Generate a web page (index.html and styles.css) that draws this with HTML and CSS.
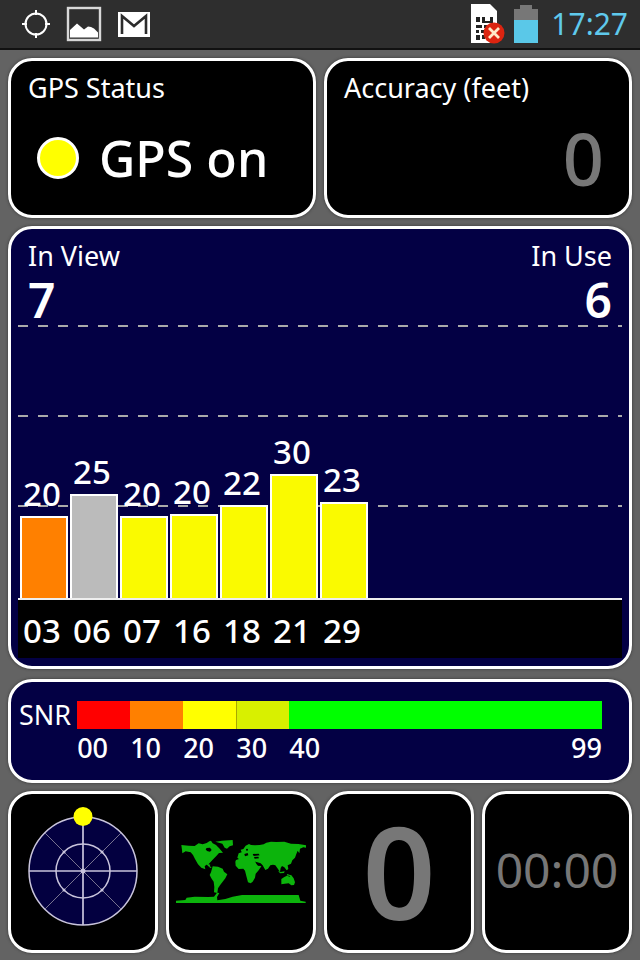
FILE: index.html
```html
<!DOCTYPE html>
<html lang="en">
<head>
    <meta charset="utf-8">
    <meta name="viewport" content="width=device-width, initial-scale=1">
    <title>GPS Status</title>
    <link rel="stylesheet" href="styles.css">
</head>
<body>
    <header class="statusbar">
        <div class="notifications">
            <svg width="28" height="28" viewBox="0 0 28 28" fill="none" stroke="#fff" stroke-width="2">
                <circle cx="14" cy="14" r="10.5"/>
                <path d="M14 0v5M14 23v5M0 14h5M23 14h5"/>
            </svg>
            <svg width="36" height="36" viewBox="0 0 36 36">
                <rect x="2" y="2" width="32" height="32" fill="none" stroke="#d8d8d8" stroke-width="2.4"/>
                <path d="M4 31.500V24l7-6.500 7 6 4-3 3 .5 3 1.500 4 4v5z" fill="#fff"/>
            </svg>
            <svg width="32" height="25" viewBox="0 0 32 25">
                <path d="M0 0h32v25H0z" fill="#fff"/>
                <path d="M4 22V4l12 10L28 4v18" fill="none" stroke="#2c2c2c" stroke-width="2.600"/>
            </svg>
        </div>
        <div class="system">
            <svg width="34" height="40" viewBox="0 0 34 40">
                <path d="M0 0h19l7 7v32H0z" fill="#fff"/>
                <path d="M5 13h4v5H5zM11 13h3v4h5v-4h3v6H11zM5 21h6v3H5zM13 21h6v3h-6zM5 26h3v3H5zM10 26h4v3h-4zM5 31h4v5H5zM11 31h3v4h-3z" fill="#222"/>
                <circle cx="23" cy="29" r="10.5" fill="#dc2410"/>
                <path d="M18 24l10 10M28 24L18 34" stroke="#ffe9c8" stroke-width="2.800"/>
            </svg>
            <svg width="26" height="40" viewBox="0 0 26 40">
                <path d="M7 1h12v4h6v12H1V5h6z" fill="#777"/>
                <path d="M1 16h24v23H1z" fill="#5ac8e8"/>
            </svg>
            <time class="clock">17:27</time>
        </div>
    </header>

    <main class="dashboard">
        <div class="row">
            <section class="panel summary">
                <h2>GPS Status</h2>
                <div class="gps-state"><span class="led"></span>GPS on</div>
            </section>
            <section class="panel summary">
                <h2>Accuracy (feet)</h2>
                <div class="accuracy">0</div>
            </section>
        </div>

        <section class="panel blue satellites">
            <div class="counts">
                <div>
                    <h2>In View</h2>
                    <div class="count">7</div>
                </div>
                <div class="in-use">
                    <h2>In Use</h2>
                    <div class="count">6</div>
                </div>
            </div>
            <div class="plot">
                <div class="sat"><span>20</span><div class="bar orange" style="height: 82px"></div></div>
                <div class="sat"><span>25</span><div class="bar grey" style="height: 104px"></div></div>
                <div class="sat"><span>20</span><div class="bar" style="height: 82px"></div></div>
                <div class="sat"><span>20</span><div class="bar" style="height: 84px"></div></div>
                <div class="sat"><span>22</span><div class="bar" style="height: 93px"></div></div>
                <div class="sat"><span>30</span><div class="bar" style="height: 124px"></div></div>
                <div class="sat"><span>23</span><div class="bar" style="height: 96px"></div></div>
            </div>
            <div class="ids">
                <span>03</span><span>06</span><span>07</span><span>16</span><span>18</span><span>21</span><span>29</span>
            </div>
        </section>

        <section class="panel blue snr">
            <h2>SNR</h2>
            <div class="scale colors">
                <span class="c00"></span><span class="c10"></span><span class="c20"></span><span class="c30"></span><span class="c40"></span>
            </div>
            <div class="scale values">
                <span>00</span><span>10</span><span>20</span><span>30</span><span class="last"><span>40</span><span>99</span></span>
            </div>
        </section>

        <div class="row">
            <section class="panel tile">
                <svg width="112" height="130" viewBox="-56 -65 112 130" fill="none" stroke="#c9c4dc">
                    <circle r="54" fill="#030040" stroke-width="1.500"/>
                    <circle r="27" stroke-width="1.500"/>
                    <path d="M-54 0H54M0-54V54" stroke-width="1.700"/>
                    <path d="M-38-38L38 38M38-38L-38 38" stroke="#77738f"/>
                    <g fill="#c9c4dc" stroke="none">
                        <circle r="2.500"/>
                        <circle cx="-19" cy="-19" r="1.500"/>
                        <circle cx="19" cy="-19" r="1.500"/>
                        <circle cx="-19" cy="19" r="1.500"/>
                        <circle cx="19" cy="19" r="1.500"/>
                    </g>
                    <circle cy="-54.500" r="9.500" fill="#ff0" stroke="none"/>
                </svg>
            </section>
            <section class="panel tile">
                <svg width="130" height="64" viewBox="50 160 390 192" fill="#0cb40c">
                    <!-- Americas -->
                    <path d="M66 178l22 2 18 1 12-8 12 3 12-4 8-5 5-2 5 8 10 5 9 9 12 14-12 1-8 9-11 11-9 10-6 6-4-1-5 5 2 9-12-5-10-10-9-16-6-12-7-8-15-3-10 6-1-10z"/>
                    <path d="M143 234l10 3-2 5 6 3-4 2-9-8zM160 242l16 1 14 6 4 9 10 8-6 12-8 10-8 11-6 9-2 14-10-2 1-16-2-16-7-10-5-10 4-8z"/>
                    <path d="M168 168l20-3 32-2 1 16-10 3-8 7-7-3-7-12zM160 180l10 3 8 8 8 7-10 1-12-9z"/>
                    <!-- Europe, Asia -->
                    <path d="M234 216l4-13 9-3-3-8 8-2 7-10 10-5 6 3 12 1 14-1 12-2 8-5 14-3 16 1 24-1 20 6 22 1 19 3 19 2-9 7-14-2-10 4-2 14-5-8-4 10-4 11-8 8-4 10-10 5 2 11-5 4-7-9-7-4-4 6-2 12-6-9-8-11-7-2-8 2-7 10-8 4-8-14-6-6-15-5-13 2-11-4-8-1-6 5z"/>
                    <!-- Africa -->
                    <path d="M230 223l18-6 12 4 12 3 14 2 8 12 12 4-8 12-9 10-2 12-7 12-6 5-8-3-5-19-4-16-5-6-14 1-9-10-1-12z"/>
                    <path d="M356 255l8 4 12-2-2 5-12 1zM384 265l14 5-4 2-12-3zM366 280l9-6 8-4 8 3 4-6 8 11 4 12-3 8-8 1-8-6-12 1-10 2z"/>
                    <!-- Antarctica -->
                    <path d="M50 345l28-2 4-7 24-3 40 1 18-1 9-12 7 1-7 12 1 10 24-4 22-7 28-5h170l5 17 16 3v5H50z"/>
                    <g fill="#000">
                        <path d="M142 187l10-1 5 7-5 5-9-2-4-5zM255 205l10-3 2 7-10 3zM280 205l18-1 3 5-18 2zM284 214l13-1 2 5-13 1zM290 233l6 7 6 1-4-8z"/>
                        <circle cx="263" cy="192" r="3"/>
                    </g>
                </svg>
            </section>
            <section class="panel tile speed">0</section>
            <section class="panel tile elapsed">00:00</section>
        </div>
    </main>
</body>
</html>
```
FILE: styles.css
```css
* { box-sizing: border-box; }
body { margin: 0; min-height: 100vh; background: #636363; color: #fff; font-family: "Noto Sans", sans-serif; font-weight: 500; }
h2 { margin: 0; font-size: 27px; line-height: 32px; font-weight: normal; }
svg { display: block; flex: none; }

.statusbar { display: flex; justify-content: space-between; align-items: center; height: 50px; padding: 0 12px 0 22px; background: #2e2e2e; border-bottom: 2px solid #111; }
.notifications, .system { display: flex; align-items: center; }
.notifications { gap: 16px; }
.system { gap: 8px; }
.clock { color: #5fc9ec; font-size: 30px; line-height: 40px; margin-left: 4px; font-weight: normal; }

.dashboard { display: flex; flex-direction: column; gap: 8px; padding: 8px; }
.row { display: flex; gap: 8px; }
.panel { border: 3px solid #fff; border-radius: 24px; background: #000; box-shadow: 0 0 3px #333; }
.blue { background: #030044; }

.summary { flex: 1; height: 160px; padding: 11px 17px; }
.gps-state { display: flex; align-items: center; gap: 20px; margin-top: 18px; padding-left: 9px; font-size: 50px; line-height: 72px; }
.led { width: 42px; height: 42px; border: 3px solid #fff; border-radius: 50%; background: #ff0; }
.accuracy { margin-top: 18px; padding-right: 8px; color: #777; font-size: 72px; line-height: 72px; text-align: right; }

.satellites { padding: 11px 7px 8px; margin-bottom: 2px; }
.counts { display: flex; justify-content: space-between; height: 85px; padding: 0 10px; }
.in-use { text-align: right; }
.count { font-size: 48px; line-height: 56px; font-weight: 600; }
.plot {
    display: flex;
    align-items: flex-end;
    gap: 2px;
    height: 275px;
    padding-left: 2px;
    border-bottom: 2px solid #eee;
    background-image: linear-gradient(90deg, #aaa 10px, transparent 10px), linear-gradient(90deg, #aaa 10px, transparent 10px), linear-gradient(90deg, #aaa 10px, transparent 10px);
    background-size: 20px 2px;
    background-position: 0 0, 0 90px, 0 180px;
    background-repeat: repeat-x;
}
.sat { width: 48px; font-size: 33px; line-height: 44px; text-align: center; }
.sat span { display: block; padding-right: 4px; }
.bar { border: 2px solid #fff; border-bottom: 0; background: #fafa00; }
.orange { background: #ff8000; }
.grey { background: #bbb; }
.ids { display: flex; gap: 2px; height: 58px; padding-left: 2px; background: #000; }
.ids span { width: 48px; padding-right: 4px; font-size: 33px; line-height: 62px; text-align: center; }

.snr { display: grid; grid-template-columns: auto 1fr; column-gap: 6px; align-items: center; padding: 17px 27px 15px 8px; }
.scale { display: grid; grid-template-columns: 10fr 10fr 10fr 10fr 59fr; }
.colors { height: 28px; }
.values { grid-column: 2; font-size: 27px; line-height: 34px; }
.last { display: flex; justify-content: space-between; }
.c00 { background: #f00; }
.c10 { background: #ff8000; }
.c20 { background: #ff0; }
.c30 { background: #d8f000; border-left: 1px solid #a8a800; }
.c40 { background: #0f0; }

.tile { flex: 1; display: flex; align-items: center; justify-content: center; height: 162px; padding-bottom: 2px; color: #777; }
.speed { font-size: 128px; line-height: 128px; font-weight: 600; }
.elapsed { font-size: 48px; font-weight: normal; padding-bottom: 6px; }
```
